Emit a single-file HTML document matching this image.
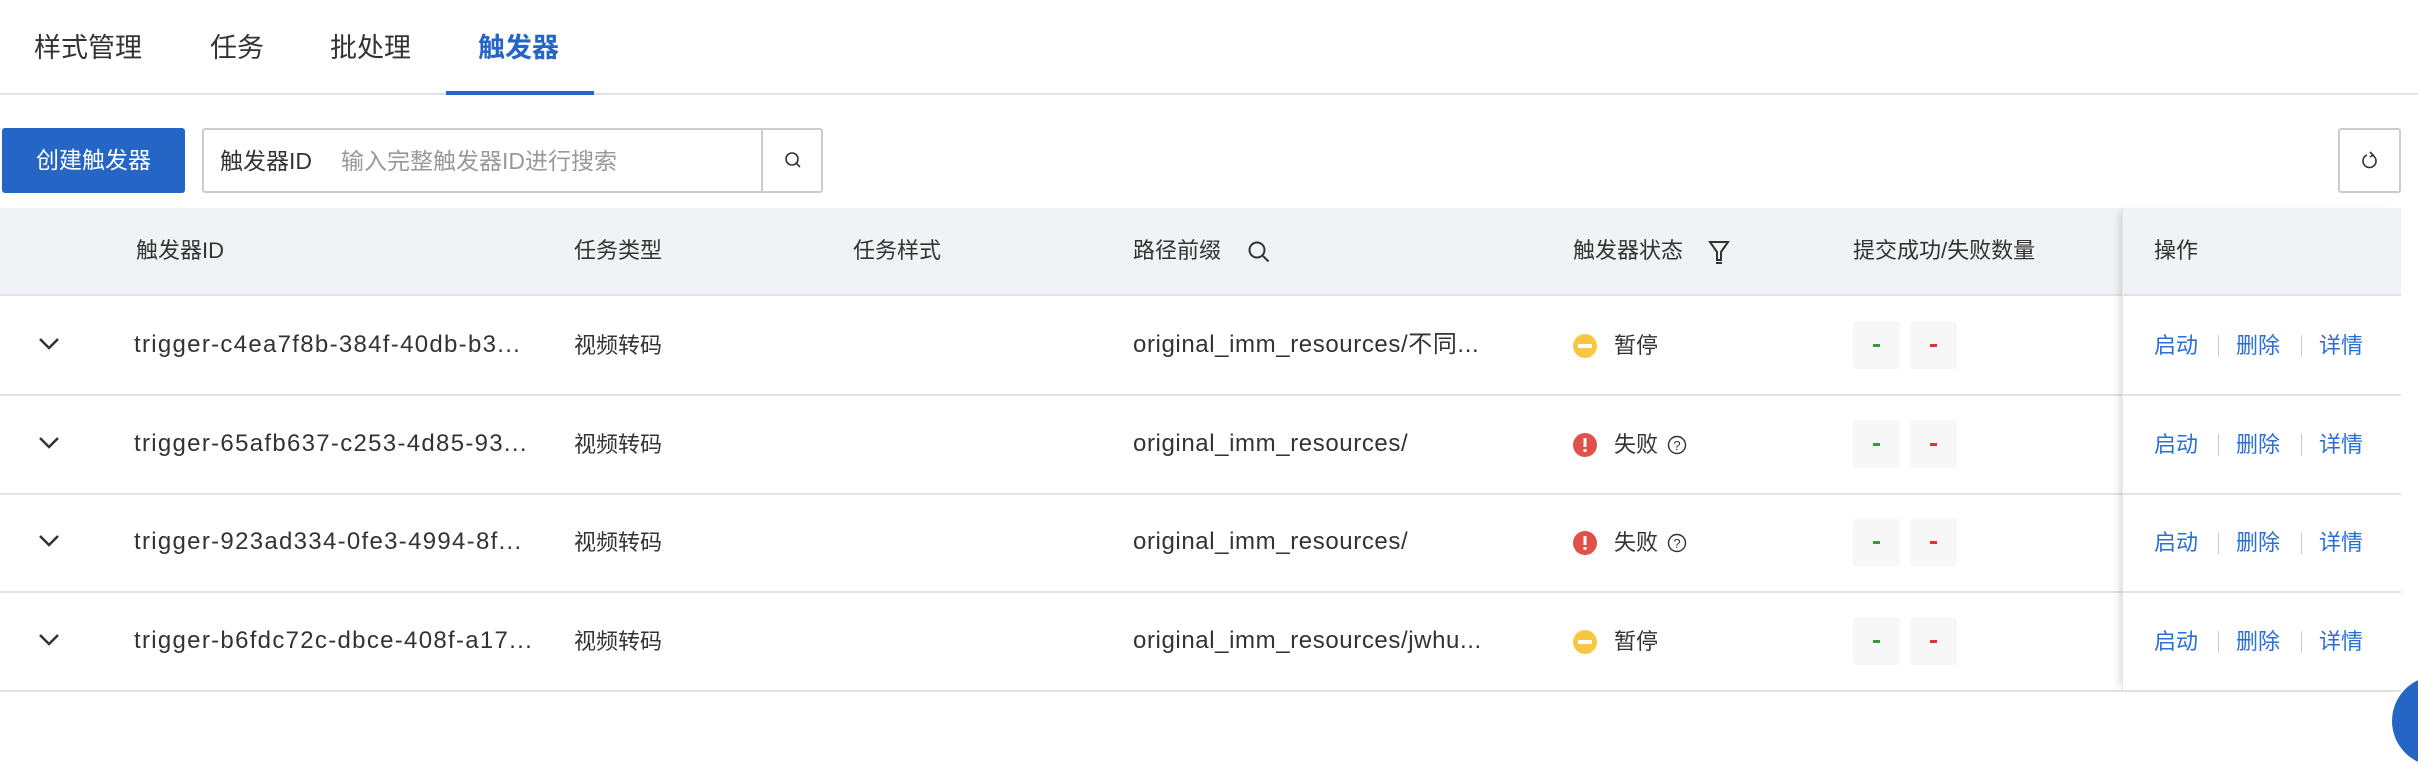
<!DOCTYPE html>
<html><head><meta charset="utf-8"><style>
*{margin:0;padding:0;box-sizing:border-box}
body{width:2418px;height:752px;background:#fff;position:relative;overflow:hidden;font-family:"Liberation Sans","Noto Sans CJK SC",sans-serif;color:#333;font-size:22px}
.a{position:absolute;white-space:nowrap}
.tab{top:30px;font-size:27px;color:#333;line-height:36px}
.hd{top:208px;left:0;width:2401px;height:88px;background:#f0f2f5;border-bottom:2px solid #e3e3e3}
.row{left:0;width:2401px;height:98px;border-bottom:2px solid #e3e3e3}
.t{line-height:30px}
.lt{font-size:24px;letter-spacing:1.3px}
.pt{font-size:24px;letter-spacing:0.6px}
.box{width:47px;height:48px;background:#f7f7f7;border-radius:3px}
.box i{position:absolute;left:20px;top:23px;width:7px;height:3px}
.g i{background:#3a9a3a}.r i{background:#d33}
.lk{color:#2a6fd6}
.sep{width:1px;height:22px;background:#ccc}
</style></head><body>
<div class="a tab" style="left:34px">样式管理</div>
<div class="a tab" style="left:210px">任务</div>
<div class="a tab" style="left:330px">批处理</div>
<div class="a tab" style="left:478px;color:#2465c5;font-weight:bold">触发器</div>
<div class="a" style="left:0;top:93px;width:2418px;height:2px;background:#e3e3e3"></div>
<div class="a" style="left:446px;top:91px;width:148px;height:4px;background:#2465c5"></div>

<div class="a" style="left:2px;top:128px;width:183px;height:65px;background:#2465c5;border-radius:3px;color:#fff;font-size:23px;line-height:65px;text-align:center">创建触发器</div>
<div class="a" style="left:202px;top:128px;width:621px;height:65px;border:2px solid #ccc;border-radius:3px"></div>
<div class="a" style="left:761px;top:130px;width:2px;height:61px;background:#ccc"></div>
<div class="a t" style="left:220px;top:146px;font-size:23px">触发器ID</div>
<div class="a t" style="left:341px;top:146px;font-size:23px;color:#999">输入完整触发器ID进行搜索</div>
<svg class="a" style="left:782px;top:149px" width="22" height="22" viewBox="0 0 22 22"><circle cx="10" cy="10" r="6" fill="none" stroke="#333" stroke-width="1.6"/><path d="M14 14l4 4" stroke="#333" stroke-width="1.6"/></svg>
<div class="a" style="left:2338px;top:128px;width:63px;height:65px;border:2px solid #ccc;border-radius:3px"></div>
<svg class="a" style="left:2359px;top:150px" width="22" height="22" viewBox="0 0 22 22"><path d="M13 5A6.5 6.5 0 1 1 8 5" fill="none" stroke="#333" stroke-width="1.6"/><path d="M11 2l3 3-3 2" fill="none" stroke="#333" stroke-width="1.6"/></svg>

<div class="a hd"></div>
<div class="a t" style="left:136px;top:236px">触发器ID</div>
<div class="a t" style="left:574px;top:236px">任务类型</div>
<div class="a t" style="left:853px;top:236px">任务样式</div>
<div class="a t" style="left:1133px;top:236px">路径前缀</div>
<svg class="a" style="left:1247px;top:240px" width="24" height="24" viewBox="0 0 24 24"><circle cx="10" cy="10" r="7.5" fill="none" stroke="#333" stroke-width="2"/><path d="M15.5 15.5l6 6" stroke="#333" stroke-width="2"/></svg>
<div class="a t" style="left:1573px;top:236px">触发器状态</div>
<svg class="a" style="left:1708px;top:240px" width="22" height="26" viewBox="0 0 22 26"><path d="M2 2h18l-7 10v8h-4v-8z" fill="none" stroke="#333" stroke-width="2"/><path d="M8 23h6" stroke="#333" stroke-width="2"/></svg>
<div class="a t" style="left:1853px;top:236px">提交成功/失败数量</div>
<div class="a t" style="left:2154px;top:236px">操作</div>

<div class="a row" style="top:298px"></div>
<div class="a row" style="top:397px"></div>
<div class="a row" style="top:495px"></div>
<div class="a row" style="top:594px"></div>

<div class="a" style="left:2122px;top:208px;width:279px;height:483px;box-shadow:-6px 0 8px -4px rgba(0,0,0,0.15);border-left:1px solid #e5e5e5"></div>

<div class="a" style="left:2392px;top:676px;width:90px;height:90px;border-radius:50%;background:#2465c5"></div>

<!-- row 1 -->
<svg class="a" style="left:38px;top:337px" width="22" height="14"><path d="M2 2l9 9 9-9" fill="none" stroke="#333" stroke-width="2.5"/></svg>
<div class="a t lt" style="left:134px;top:330px">trigger-c4ea7f8b-384f-40db-b3...</div>
<div class="a t" style="left:574px;top:331px">视频转码</div>
<div class="a t pt" style="left:1133px;top:330px">original_imm_resources/不同...</div>
<svg class="a" style="left:1573px;top:334px" width="24" height="24"><circle cx="12" cy="12" r="12" fill="#f7c744"/><rect x="5" y="10" width="14" height="4" fill="#fff"/></svg>
<div class="a t" style="left:1614px;top:331px">暂停</div>
<div class="a box g" style="left:1853px;top:321px"><i></i></div>
<div class="a box r" style="left:1910px;top:321px"><i></i></div>
<div class="a t lk" style="left:2154px;top:331px">启动</div><div class="a sep" style="left:2218px;top:335px"></div>
<div class="a t lk" style="left:2236px;top:331px">删除</div><div class="a sep" style="left:2301px;top:335px"></div>
<div class="a t lk" style="left:2319px;top:331px">详情</div>

<!-- row 2 -->
<svg class="a" style="left:38px;top:436px" width="22" height="14"><path d="M2 2l9 9 9-9" fill="none" stroke="#333" stroke-width="2.5"/></svg>
<div class="a t lt" style="left:134px;top:429px">trigger-65afb637-c253-4d85-93...</div>
<div class="a t" style="left:574px;top:430px">视频转码</div>
<div class="a t pt" style="left:1133px;top:429px">original_imm_resources/</div>
<svg class="a" style="left:1573px;top:433px" width="24" height="24"><circle cx="12" cy="12" r="12" fill="#e0514a"/><rect x="10.5" y="5" width="3" height="9" fill="#fff"/><rect x="10.5" y="16" width="3" height="3" fill="#fff"/></svg>
<div class="a t" style="left:1614px;top:430px">失败</div>
<svg class="a" style="left:1667px;top:435px" width="20" height="20"><circle cx="10" cy="10" r="8.5" fill="none" stroke="#333" stroke-width="1.4"/><text x="10" y="15" font-size="13" text-anchor="middle" fill="#333" font-family="Liberation Sans">?</text></svg>
<div class="a box g" style="left:1853px;top:420px"><i></i></div>
<div class="a box r" style="left:1910px;top:420px"><i></i></div>
<div class="a t lk" style="left:2154px;top:430px">启动</div><div class="a sep" style="left:2218px;top:434px"></div>
<div class="a t lk" style="left:2236px;top:430px">删除</div><div class="a sep" style="left:2301px;top:434px"></div>
<div class="a t lk" style="left:2319px;top:430px">详情</div>

<!-- row 3 -->
<svg class="a" style="left:38px;top:534px" width="22" height="14"><path d="M2 2l9 9 9-9" fill="none" stroke="#333" stroke-width="2.5"/></svg>
<div class="a t lt" style="left:134px;top:527px">trigger-923ad334-0fe3-4994-8f...</div>
<div class="a t" style="left:574px;top:528px">视频转码</div>
<div class="a t pt" style="left:1133px;top:527px">original_imm_resources/</div>
<svg class="a" style="left:1573px;top:531px" width="24" height="24"><circle cx="12" cy="12" r="12" fill="#e0514a"/><rect x="10.5" y="5" width="3" height="9" fill="#fff"/><rect x="10.5" y="16" width="3" height="3" fill="#fff"/></svg>
<div class="a t" style="left:1614px;top:528px">失败</div>
<svg class="a" style="left:1667px;top:533px" width="20" height="20"><circle cx="10" cy="10" r="8.5" fill="none" stroke="#333" stroke-width="1.4"/><text x="10" y="15" font-size="13" text-anchor="middle" fill="#333" font-family="Liberation Sans">?</text></svg>
<div class="a box g" style="left:1853px;top:518px"><i></i></div>
<div class="a box r" style="left:1910px;top:518px"><i></i></div>
<div class="a t lk" style="left:2154px;top:528px">启动</div><div class="a sep" style="left:2218px;top:532px"></div>
<div class="a t lk" style="left:2236px;top:528px">删除</div><div class="a sep" style="left:2301px;top:532px"></div>
<div class="a t lk" style="left:2319px;top:528px">详情</div>

<!-- row 4 -->
<svg class="a" style="left:38px;top:633px" width="22" height="14"><path d="M2 2l9 9 9-9" fill="none" stroke="#333" stroke-width="2.5"/></svg>
<div class="a t lt" style="left:134px;top:626px">trigger-b6fdc72c-dbce-408f-a17...</div>
<div class="a t" style="left:574px;top:627px">视频转码</div>
<div class="a t pt" style="left:1133px;top:626px">original_imm_resources/jwhu...</div>
<svg class="a" style="left:1573px;top:630px" width="24" height="24"><circle cx="12" cy="12" r="12" fill="#f7c744"/><rect x="5" y="10" width="14" height="4" fill="#fff"/></svg>
<div class="a t" style="left:1614px;top:627px">暂停</div>
<div class="a box g" style="left:1853px;top:617px"><i></i></div>
<div class="a box r" style="left:1910px;top:617px"><i></i></div>
<div class="a t lk" style="left:2154px;top:627px">启动</div><div class="a sep" style="left:2218px;top:631px"></div>
<div class="a t lk" style="left:2236px;top:627px">删除</div><div class="a sep" style="left:2301px;top:631px"></div>
<div class="a t lk" style="left:2319px;top:627px">详情</div>
</body></html>
